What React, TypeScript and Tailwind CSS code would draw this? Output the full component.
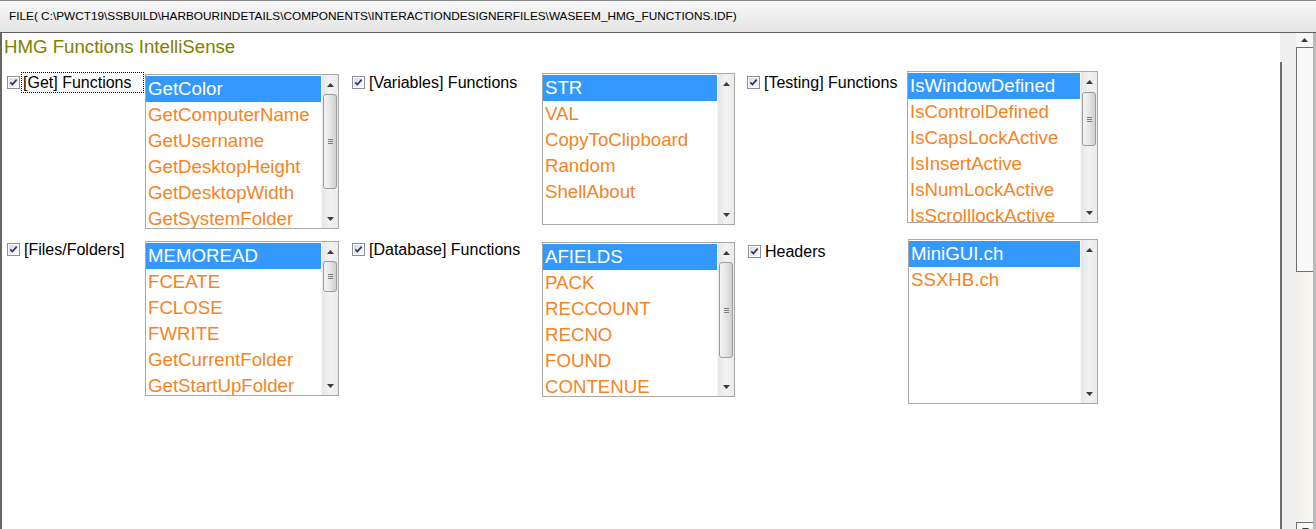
/**
 * HMG Functions IntelliSense — окно выбора групп функций (PWCT / Harbour MiniGUI).
 * Шесть групп: флажок + подпись + список с классической полосой прокрутки.
 */

type Group = {
  label: string;
  focus?: boolean;
  wrap: string;
  labelRow: string;
  labelBox: string;
  listBox: string;
  thumb?: string;
  items: string[];
};

const ROW_TOP: Group[] = [
  {
    label: "[Get] Functions",
    focus: true,
    wrap: "ml-[5px]",
    labelRow: "mt-[1px] w-[138px]",
    labelBox: "w-[123px]",
    listBox: "mt-[3px] w-[194px] h-[155px]",
    thumb: "mt-[2px] h-[95px]",
    items: ["GetColor", "GetComputerName", "GetUsername", "GetDesktopHeight", "GetDesktopWidth", "GetSystemFolder"],
  },
  {
    label: "[Variables] Functions",
    wrap: "ml-[13px]",
    labelRow: "mt-[1px] w-[190px]",
    labelBox: "w-[170px]",
    listBox: "mt-[2px] w-[193px] h-[152px]",
    items: ["STR", "VAL", "CopyToClipboard", "Random", "ShellAbout"],
  },
  {
    label: "[Testing] Functions",
    wrap: "ml-[12px]",
    labelRow: "mt-[1px] w-[160px]",
    labelBox: "w-[145px]",
    listBox: "mt-0 w-[191px] h-[152px]",
    thumb: "mt-[3px] h-[54px]",
    items: ["IsWindowDefined", "IsControlDefined", "IsCapsLockActive", "IsInsertActive", "IsNumLockActive", "IsScrolllockActive"],
  },
];

const ROW_BOTTOM: Group[] = [
  {
    label: "[Files/Folders]",
    wrap: "ml-[5px]",
    labelRow: "mt-0 w-[138px]",
    labelBox: "w-[123px]",
    listBox: "mt-[2px] w-[194px] h-[155px]",
    thumb: "mt-[2px] h-[31px]",
    items: ["MEMOREAD", "FCEATE", "FCLOSE", "FWRITE", "GetCurrentFolder", "GetStartUpFolder"],
  },
  {
    label: "[Database] Functions",
    wrap: "ml-[13px]",
    labelRow: "mt-0 w-[190px]",
    labelBox: "w-[170px]",
    listBox: "mt-[3px] w-[193px] h-[155px]",
    thumb: "mt-[2px] h-[96px]",
    items: ["AFIELDS", "PACK", "RECCOUNT", "RECNO", "FOUND", "CONTENUE"],
  },
  {
    label: "Headers",
    wrap: "ml-[13px]",
    labelRow: "mt-[2px] w-[160px]",
    labelBox: "w-[145px]",
    listBox: "mt-0 w-[190px] h-[165px]",
    items: ["MiniGUI.ch", "SSXHB.ch"],
  },
];

function CheckBox() {
  return (
    <svg width="13" height="13" viewBox="0 0 13 13" className="shrink-0">
      <defs>
        <linearGradient id="cbg" x1="0" y1="0" x2="1" y2="1">
          <stop offset="0" stopColor="#d9dbe3" />
          <stop offset="1" stopColor="#fbfbfb" />
        </linearGradient>
      </defs>
      <rect x="0.5" y="0.5" width="12" height="12" fill="#fff" stroke="#8e8f99" />
      <rect x="2" y="2" width="9" height="9" fill="url(#cbg)" />
      <path d="M3.3 6.4 L5.4 8.6 L9.7 3.6" fill="none" stroke="#2d3570" strokeWidth="1.7" />
    </svg>
  );
}

function Arrow({ down }: { down?: boolean }) {
  return (
    <svg width="7" height="4" viewBox="0 0 7 4">
      <path d={down ? "M0 0 L7 0 L3.5 4 Z" : "M0 4 L7 4 L3.5 0 Z"} fill="#3a3a3a" />
    </svg>
  );
}

function ListScroll({ thumb }: { thumb?: string }) {
  return (
    <div className="w-[17px] shrink-0 flex flex-col bg-gradient-to-r from-[#e6e6e6] via-[#f2f2f2] to-[#ebebeb] border-l border-[#f8f8f8]">
      <div className="h-[17px] flex items-center justify-center pt-[2px]">
        <Arrow />
      </div>
      {thumb && (
        <div
          className={`${thumb} mx-[1px] rounded-[3px] border border-[#9c9c9c] bg-gradient-to-r from-[#f4f4f4] via-[#e6e6e6] to-[#cfcfcf] flex flex-col items-center justify-center gap-[1px]`}
        >
          <div className="w-[5px] h-px bg-[#7d7d7d]" />
          <div className="w-[5px] h-px bg-[#7d7d7d]" />
          <div className="w-[5px] h-px bg-[#7d7d7d]" />
        </div>
      )}
      <div className="flex-1" />
      <div className="h-[17px] flex items-center justify-center pb-[2px]">
        <Arrow down />
      </div>
    </div>
  );
}

function GroupBlock({ g }: { g: Group }) {
  return (
    <div className={`${g.wrap} flex items-start shrink-0`}>
      <div className={`${g.labelRow} h-[21px] flex items-center shrink-0`}>
        <CheckBox />
        <span
          className={`${g.labelBox} ml-px h-[21px] flex items-center text-[16px] leading-[19px] text-black whitespace-nowrap border ${
            g.focus ? "border-dotted border-black pl-px" : "border-transparent pl-[2px]"
          }`}
        >
          {g.label}
        </span>
      </div>
      <div className={`${g.listBox} border border-[#a9a9a9] bg-white flex shrink-0 overflow-hidden`}>
        <ul className="flex-1 pt-px">
          {g.items.map((it, i) => (
            <li
              key={it}
              className={`h-[26px] px-[2px] flex items-center text-[18.67px] whitespace-nowrap ${
                i === 0 ? "bg-[#3399ff] text-white" : "text-[#f5841f]"
              }`}
            >
              {it}
            </li>
          ))}
        </ul>
        <ListScroll thumb={g.thumb} />
      </div>
    </div>
  );
}

export default function App() {
  return (
    <div className="w-[1316px] h-[529px] overflow-hidden bg-white flex flex-col font-['Liberation_Sans',Arial,sans-serif]">
      <header className="h-[32px] shrink-0 border-t border-[#8a8a8a] bg-gradient-to-b from-[#f8f8f8] to-[#e3e3e3] flex items-center pl-[9px] text-[11.8px] text-black whitespace-nowrap">
        FILE( C:\PWCT19\SSBUILD\HARBOURINDETAILS\COMPONENTS\INTERACTIONDESIGNERFILES\WASEEM_HMG_FUNCTIONS.IDF)
      </header>

      <div className="flex-1 min-h-0 flex border-t border-[#5f5f5f]">
        <main className="flex-1 min-w-0 border-l-2 border-[#666] bg-white">
          <h1 className="pl-[2px] pt-[3px] text-[18.67px] leading-[21px] text-[#808000]">
            HMG Functions IntelliSense
          </h1>
          <div className="mt-[14px] flex items-start">
            {ROW_TOP.map((g) => (
              <GroupBlock key={g.label} g={g} />
            ))}
          </div>
          <div className="mt-[10px] flex items-start">
            {ROW_BOTTOM.map((g) => (
              <GroupBlock key={g.label} g={g} />
            ))}
          </div>
        </main>

        {/* промежуток между панелью и полосой прокрутки */}
        <div className="w-[16px] shrink-0 bg-[#efefef]">
          <div className="mt-[29px] h-full border-l-2 border-[#6e6e6e]" />
        </div>

        {/* полоса прокрутки окна */}
        <div className="w-[17px] shrink-0 flex flex-col">
          <div className="h-[15px] shrink-0 bg-[#f7f7f7] border-b border-[#6f6f6f] flex items-center justify-center">
            <Arrow />
          </div>
          <div className="h-[224px] shrink-0 bg-[#f8f8f8] border-l border-b border-[#6f6f6f]" />
          <div className="h-[250px] shrink-0 bg-gradient-to-r from-[#f1efea] to-[#faf7f1]" />
          <div className="h-[15px] shrink-0 bg-[#f7f7f7] border-t border-l border-[#6f6f6f] flex items-center justify-center">
            <Arrow down />
          </div>
        </div>
        <div className="w-[3px] shrink-0 bg-[#b9b9b9]" />
      </div>
    </div>
  );
}
